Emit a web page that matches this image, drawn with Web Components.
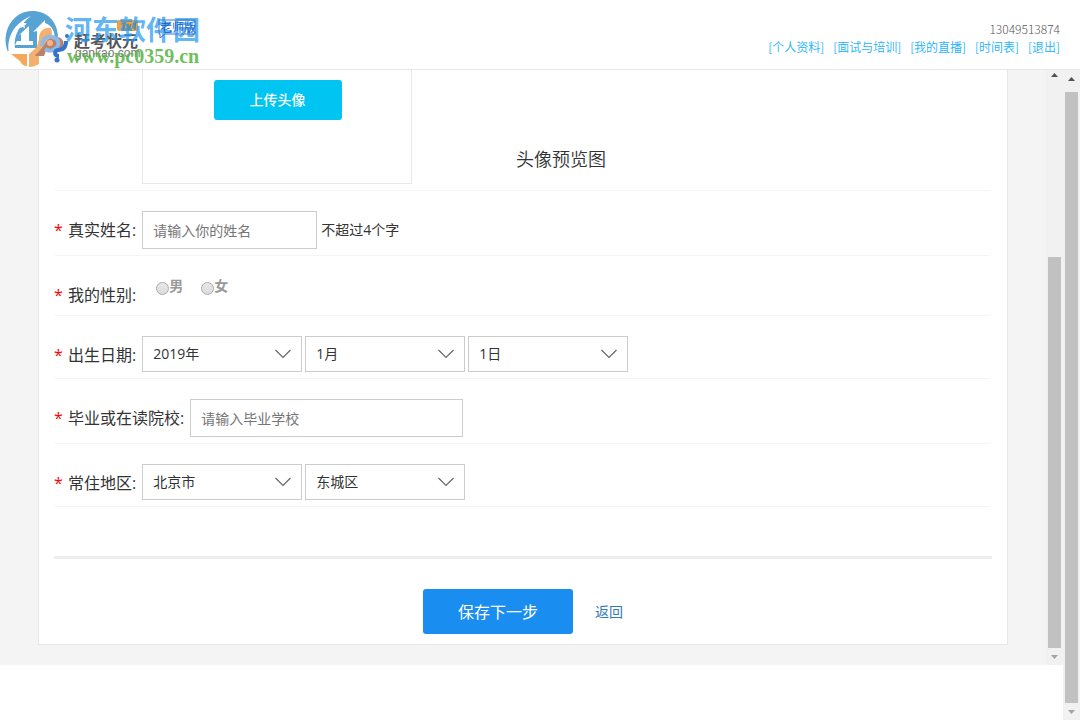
<!DOCTYPE html>
<html lang="zh-CN">
<head>
<meta charset="utf-8">
<title>个人资料</title>
<style>
html,body{margin:0;background:#fff}
body{font-family:"Open Sans","Noto Sans CJK SC",sans-serif;font-size:14px;line-height:20px;color:#333}
</style>
</head>
<body>
<profile-app></profile-app>
<script>
const define=(name,html,setup)=>customElements.define(name,class extends HTMLElement{
  connectedCallback(){
    if(this.shadowRoot)return;
    const t=document.createElement('template');
    t.innerHTML=html;
    this.attachShadow({mode:'open'}).append(t.content.cloneNode(true));
    if(setup)setup(this,this.shadowRoot);
  }
});

define('site-logo',`<style>:host{display:block;width:210px;height:69px}svg{display:block}</style>
<svg width="210" height="69" viewBox="0 0 210 69" role="img" aria-label="赶考状元 老师版">
<path d="M8 52C0 32 13 11 32 11C47 11 57 21 58 36L53 51H8Z" fill="#57a3d4"/>
<path d="M9 53C6 38 14 23 31 16C20 24 13 36 15 48H36V53Z" fill="#fff"/>
<path d="M15 45L17 41H21V34L18 36L29 26V41H33V45Z" fill="#fff"/>
<path d="M33 32L45 20V23C53 26 56 33 54 43L49 48H37V31Z" fill="#fff"/>
<path d="M23 20l1 3 3 .5-2.500 2 .5 3-2-1.500-3 1 1-3-2-2h3z" fill="#fff"/>
<path d="M11 54H27V66C24 66 21 64 20 61Z" fill="#f5a75a"/>
<path d="M29 54L37 47L39 39C39 31 44 27 51 28C54 36 50 42 46 46L39 52V64C36 66 32 67 29 67Z" fill="#f3b06f"/>
<path d="M35 55C43 50 45 39 53 37C61 36 66 41 62 48C57 54 51 51 47 48L44 56H36Z" fill="#ba8069"/>
<path d="M42 46C42 39 47 36 52 37C58 38 60 43 57 47C53 52 48 51 45 49" fill="none" stroke="#8db9e8" stroke-width="4"/>
<circle cx="50" cy="43" r="3" fill="#f3b58a"/>
<path d="M66 41C66 48 62 50 58 50C54 51 54 56 59 56" fill="none" stroke="#3573c9" stroke-width="4"/>
<circle cx="67" cy="36" r="2" fill="#3573c9"/>
<circle cx="57" cy="60" r="2.500" fill="#3573c9"/>
<rect x="117" y="20" width="21" height="11" rx="2" fill="#eba33f"/>
<text x="120" y="30" font-size="10" fill="#8c8064" font-family="Open Sans" font-weight="700">1v1</text>
<text x="74" y="47" font-size="16" fill="#555" font-family="Noto Sans CJK SC" font-weight="700">赶考状元</text>
<text x="75" y="57" font-size="12" fill="#777" font-family="Liberation Sans">gankao.com</text>
<text x="65" y="40" font-size="27" fill="#2699f0" fill-opacity=".72" font-family="Noto Sans CJK SC" font-weight="700">河东软件园</text>
<path d="M159 20H195V34H165L160 38V34H159Z" fill="none" stroke="#3878ce"/>
<text x="160" y="32" font-size="12" fill="#1c5fc4" font-family="Noto Sans CJK SC">老师版</text>
<text x="67" y="63" font-size="20" fill="#54b33e" fill-opacity=".85" font-family="Liberation Serif" font-weight="700">www.pc0359.cn</text>
</svg>`);

define('site-header',`<style>
:host{display:flex;justify-content:space-between;height:69px;border-bottom:1px solid #e7e7e7;background:#fff}
.account{display:flex;flex-direction:column;align-items:flex-end;padding:20px 20px 0 0;font-size:12px;line-height:18px;color:#555;font-family:"Noto Sans CJK SC",sans-serif}
.phone{font-weight:300}
nav{display:flex;gap:9px}a{color:#1ab2ff;text-decoration:none;font-weight:350}
</style><site-logo></site-logo><div class="account"><span class="phone">13049513874</span>
<nav><a href="#profile">[个人资料]</a><a href="#training">[面试与培训]</a><a href="#live">[我的直播]</a><a href="#schedule">[时间表]</a><a href="#logout">[退出]</a></nav></div>`);

define('scroll-rail',`<style>
:host{display:flex;flex-direction:column;align-items:center;flex:none;width:17px;background:#f1f1f1}
.thumb{flex:1;width:13px;background:#c1c1c1}
.end{display:flex;justify-content:center;align-items:center;flex:none;height:17px}
.start{display:flex;justify-content:center;flex:none;box-sizing:border-box;height:var(--rail-start,22px);padding-top:var(--arrow-top,7px)}
svg{display:block}
</style><div class="start"><svg width="7" height="4"><path d="M0 4L3.500 0L7 4Z" fill="#505050"/></svg></div><div class="thumb"></div><div class="end"><svg width="7" height="4"><path d="M0 0H7L3.500 4Z" fill="#a3a3a3"/></svg></div>`);

define('form-row',`<style>
:host{display:flex;align-items:flex-start;margin-top:20px;padding-bottom:6px;border-bottom:1px solid #f5f5f5;border-radius:4px}
.label{display:flex;height:33px;font-size:16px;line-height:38px;white-space:nowrap;margin-right:6px}
.star{color:#f00;width:14px}
.fields{display:flex;gap:3px}
</style><div class="label"><span class="star">*</span><slot name="label"></slot></div><div class="fields"><slot></slot></div>`);

define('text-field',`<style>
:host{display:flex;align-items:center;gap:4px}
input{box-sizing:border-box;width:var(--field-width,175px);height:38px;border:1px solid #ccc;padding:0 10px;font:inherit;color:#333;background:#fff}
input::placeholder{color:#757575}
</style><input type="text"><span><slot></slot></span>`,(h,r)=>{const i=r.querySelector('input');i.placeholder=h.getAttribute('placeholder');i.setAttribute('aria-label',h.getAttribute('label'));});

define('select-field',`<style>
:host{display:grid;width:160px;height:36px}
select,svg{grid-area:1/1}
select{appearance:none;width:100%;height:100%;border:1px solid #ccc;border-radius:0;padding:0 10px;font:inherit;color:#333;background:#fff}
svg{align-self:center;justify-self:end;margin-right:10px;pointer-events:none}
</style><select><option></option></select><svg width="18" height="10"><path d="M1.500 1L9 8.500L16.500 1" fill="none" stroke="#666" stroke-width="1.200"/></svg>`,(h,r)=>{r.querySelector('option').textContent=h.getAttribute('value');r.querySelector('select').setAttribute('aria-label',h.getAttribute('label'));});

define('gender-field',`<style>
:host{display:flex;gap:18px;height:33px;padding:0 0 0 14px;color:#999;font-weight:700}
label{display:flex;align-items:flex-start}
input{appearance:none;box-sizing:border-box;width:13px;height:13px;margin:6px 0 0;border:1px solid #aaa;border-radius:50%;background:linear-gradient(#e8e8e8,#dcdcdc)}
</style><label><input type="radio" name="gender" value="m">男</label><label><input type="radio" name="gender" value="f">女</label>`);

define('avatar-section',`<style>
:host{display:flex;height:120px;border-bottom:1px solid #f5f5f5;border-radius:0 0 4px 4px}
.drop{display:flex;justify-content:center;align-items:flex-start;box-sizing:border-box;width:270px;height:114px;margin-left:88px;padding:10px 0 0 1px;border:1px solid #e7e7e7;border-top:0}
button{width:128px;height:40px;border:0;border-radius:3px;background:#00c5f2;color:#fff;font:inherit;font-weight:500;padding:0}
.preview{margin:76px 0 0 104px;font-size:18px;font-weight:350;line-height:26px}
</style><div class="drop"><button type="button">上传头像</button></div><div class="preview">头像预览图</div>`);

define('profile-form',`<style>
:host{display:block;box-sizing:border-box;flex:1;min-width:0;margin:0 38px 20px;padding:0 15px 10px;background:#fff;border:1px solid #e7e7e7;border-top:0}
.actions{display:flex;align-items:center;justify-content:center;gap:22px;margin-top:49px;padding-top:30px;border-top:3px solid #eee}
button{width:150px;height:45px;border:0;border-radius:3px;background:#198ef0;color:#fff;font:inherit;font-size:16px;padding:0}
a{color:#337ab7;text-decoration:none}
.school{--field-width:273px}
</style><avatar-section></avatar-section>
<form-row><span slot="label">真实姓名:</span><text-field label="真实姓名" placeholder="请输入你的姓名">不超过4个字</text-field></form-row>
<form-row><span slot="label">我的性别:</span><gender-field></gender-field></form-row>
<form-row><span slot="label">出生日期:</span><select-field label="年" value="2019年"></select-field><select-field label="月" value="1月"></select-field><select-field label="日" value="1日"></select-field></form-row>
<form-row class="school"><span slot="label">毕业或在读院校:</span><text-field label="毕业或在读院校" placeholder="请输入毕业学校"></text-field></form-row>
<form-row><span slot="label">常住地区:</span><select-field label="省市" value="北京市"></select-field><select-field label="区县" value="东城区"></select-field></form-row>
<div class="actions"><button type="button">保存下一步</button><a href="#back">返回</a></div>`);

define('profile-app',`<style>
:host{display:flex;flex-direction:column;min-height:100vh}
.body{display:flex;flex:1}
.view{flex:1;min-width:0}
.panel{display:flex;background:#f4f4f4}
.inner{--rail-start:187px;--arrow-top:3px}
</style><site-header></site-header><div class="body"><div class="view"><div class="panel"><profile-form></profile-form><scroll-rail class="inner"></scroll-rail></div></div><scroll-rail></scroll-rail></div>`);
</script>
</body>
</html>
